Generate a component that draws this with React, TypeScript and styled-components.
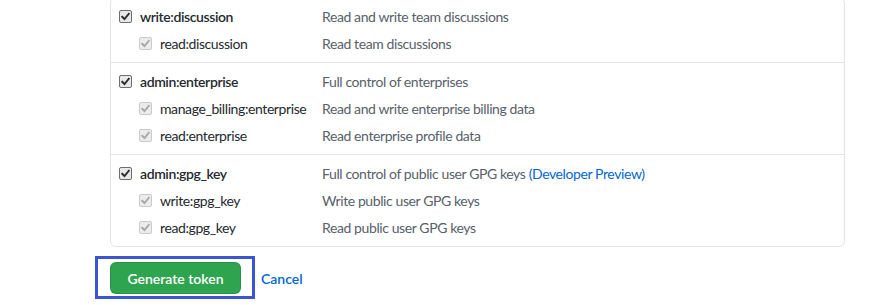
import styled, { createGlobalStyle } from 'styled-components';

type Scope = { name: string; description: string; preview?: boolean };
type Group = { parent: Scope; children: Scope[] };

const groups: Group[] = [
  {
    parent: { name: 'write:discussion', description: 'Read and write team discussions' },
    children: [{ name: 'read:discussion', description: 'Read team discussions' }],
  },
  {
    parent: { name: 'admin:enterprise', description: 'Full control of enterprises' },
    children: [
      { name: 'manage_billing:enterprise', description: 'Read and write enterprise billing data' },
      { name: 'read:enterprise', description: 'Read enterprise profile data' },
    ],
  },
  {
    parent: { name: 'admin:gpg_key', description: 'Full control of public user GPG keys', preview: true },
    children: [
      { name: 'write:gpg_key', description: 'Write public user GPG keys' },
      { name: 'read:gpg_key', description: 'Read public user GPG keys' },
    ],
  },
];

const CheckMark = ({ disabled }: { disabled?: boolean }) => (
  <Box $disabled={disabled}>
    <svg width="9" height="9" viewBox="0 0 9 9">
      <path
        d="M1.2 4.8 L3.5 7 L7.8 1.8"
        fill="none"
        stroke={disabled ? '#a8a8a8' : '#2b2b2b'}
        strokeWidth="1.9"
        strokeLinecap="square"
      />
    </svg>
  </Box>
);

export default function App() {
  return (
    <>
      <GlobalStyle />
      <Page>
        <Scopes>
          {groups.map(group => (
            <Section key={group.parent.name}>
              <Row>
                <Label>
                  <CheckMark />
                  <ParentName>{group.parent.name}</ParentName>
                </Label>
                <Description>
                  {group.parent.description}
                  {group.parent.preview && <Preview> (Developer Preview)</Preview>}
                </Description>
              </Row>
              {group.children.map(child => (
                <Row key={child.name}>
                  <Label $child>
                    <CheckMark disabled />
                    <ChildName>{child.name}</ChildName>
                  </Label>
                  <Description>{child.description}</Description>
                </Row>
              ))}
            </Section>
          ))}
        </Scopes>

        <Footer>
          <Highlight>
            <GenerateButton type="button">Generate token</GenerateButton>
          </Highlight>
          <CancelLink href="#">Cancel</CancelLink>
        </Footer>
      </Page>
    </>
  );
}

const GlobalStyle = createGlobalStyle`
  body {
    margin: 0;
    background: #fff;
    font-family: "Segoe UI", Lato, "Liberation Sans", sans-serif;
    font-size: 14px;
    color: #24292e;
  }
`;

const Page = styled.div`
  width: 872px;
  height: 305px;
  overflow: hidden;
`;

const Scopes = styled.div`
  margin: -3px 0 0 110px;
  width: 733px;
  border: 1px solid #e1e4e8;
  border-radius: 6px;
`;

const Section = styled.div`
  padding: 5px 0;

  & + & {
    border-top: 1px solid #e1e4e8;
  }
`;

const Row = styled.div`
  display: grid;
  grid-template-columns: 203px 1fr;
  align-items: center;
  height: 27px;
  padding-left: 8px;
  white-space: nowrap;
  letter-spacing: -0.4px;
`;

const Label = styled.div<{ $child?: boolean }>`
  display: flex;
  align-items: center;
  gap: 8px;
  padding-left: ${p => (p.$child ? '20px' : '0')};
`;

const Box = styled.span<{ $disabled?: boolean }>`
  display: inline-flex;
  align-items: center;
  justify-content: center;
  width: 13px;
  height: 13px;
  box-sizing: border-box;
  border: 1px solid ${p => (p.$disabled ? '#c9c9c9' : '#6d6d6d')};
  border-radius: 2px;
  background: ${p => (p.$disabled ? '#ececec' : '#e8e8e8')};
`;

const ParentName = styled.span`
  font-weight: 600;
  color: #24292e;
`;

const ChildName = styled.span`
  color: #24292e;
`;

const Description = styled.div`
  color: #586069;
`;

const Preview = styled.span`
  color: #0366d6;
`;

const Footer = styled.div`
  display: flex;
  align-items: center;
  gap: 6px;
  margin: 9px 0 0 95px;
`;

const Highlight = styled.div`
  display: flex;
  padding: 3px 11px 2px 12px;
  border: 3px solid #3b55d4;
`;

const GenerateButton = styled.button`
  width: 131px;
  height: 32px;
  padding: 0;
  border: 1px solid rgba(27, 31, 35, 0.15);
  border-radius: 6px;
  background: #2ea44f;
  color: #fff;
  font-family: inherit;
  font-size: 14px;
  font-weight: 600;
  cursor: pointer;
`;

const CancelLink = styled.a`
  color: #0366d6;
  font-weight: 600;
  text-decoration: none;
  margin-top: 1px;
`;
